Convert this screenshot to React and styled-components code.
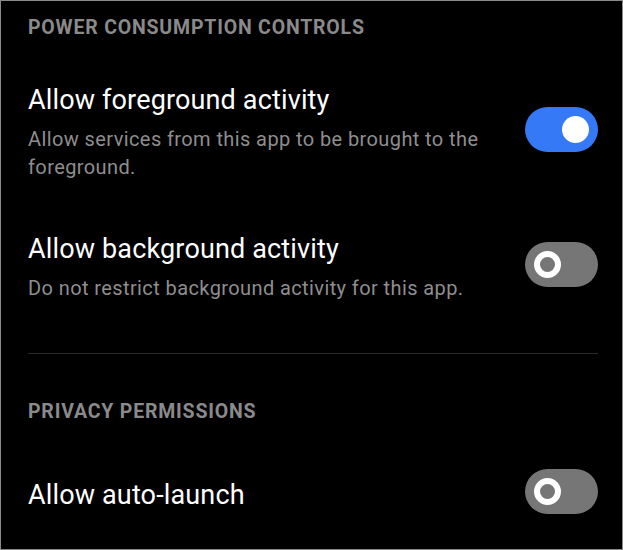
import React from "react";
import styled, { createGlobalStyle } from "styled-components";

const GlobalStyle = createGlobalStyle`
  html, body {
    margin: 0;
    padding: 0;
    background: #000;
  }
  * {
    box-sizing: border-box;
  }
`;

// whole settings panel, a thin grey frame round it like in the screenshot
const Screen = styled.div`
  width: 623px;
  height: 550px;
  background-color: #000;
  border: 1px solid #8a8a8a;
  padding: 15px 24px 0 27px;
  font-family: Roboto, "Noto Sans", "Liberation Sans", sans-serif;
  overflow: hidden;
`;

const SectionTitle = styled.div`
  font-size: 19.5px;
  line-height: 24px;
  font-weight: 700;
  color: #8a8a8a;
  letter-spacing: 0.8px;
  margin-bottom: ${({ $gap }) => $gap}px;
`;

const List = styled.div`
  display: flex;
  flex-direction: column;
  gap: 52px;
`;

const Row = styled.div`
  display: flex;
  align-items: center;
  justify-content: space-between;
  gap: 24px;
`;

const Texts = styled.div`
  flex: 1;
  display: flex;
  flex-direction: column;
  gap: 9px;
`;

const Title = styled.div`
  font-size: 27px;
  line-height: 32px;
  letter-spacing: 0.15px;
  color: #fff;
`;

const Description = styled.div`
  font-size: 20px;
  line-height: 28px;
  letter-spacing: 0.4px;
  color: #8e8e8e;
`;

const Divider = styled.div`
  height: 1px;
  background-color: #2a2a2a;
  margin: 51px 0 46px;
`;

const Track = styled.div`
  flex-shrink: 0;
  width: 73px;
  height: 45px;
  border-radius: 23px;
  margin-bottom: 6px;
  background-color: ${({ $on }) => ($on ? "#3579f6" : "#767676")};
  display: flex;
  align-items: center;
  justify-content: ${({ $on }) => ($on ? "flex-end" : "flex-start")};
  padding: 0 9px;
`;

const Knob = styled.div`
  width: 27px;
  height: 27px;
  border-radius: 50%;
  background-color: ${({ $on }) => ($on ? "#fff" : "transparent")};
  border: ${({ $on }) => ($on ? "none" : "6px solid #fff")};
`;

const Toggle = ({ on }) => (
  <Track $on={on}>
    <Knob $on={on} />
  </Track>
);

const Setting = ({ title, description, on }) => (
  <Row>
    <Texts>
      <Title>{title}</Title>
      {description && <Description>{description}</Description>}
    </Texts>
    <Toggle on={on} />
  </Row>
);

const App = () => {
  return (
    <>
      <GlobalStyle />
      <Screen>
        <SectionTitle $gap={44}>POWER CONSUMPTION CONTROLS</SectionTitle>
        <List>
          <Setting
            title="Allow foreground activity"
            description="Allow services from this app to be brought to the foreground."
            on
          />
          <Setting
            title="Allow background activity"
            description="Do not restrict background activity for this app."
          />
        </List>
        <Divider />
        <SectionTitle $gap={45}>PRIVACY PERMISSIONS</SectionTitle>
        <List>
          <Setting title="Allow auto-launch" />
        </List>
      </Screen>
    </>
  );
};

export default App;
